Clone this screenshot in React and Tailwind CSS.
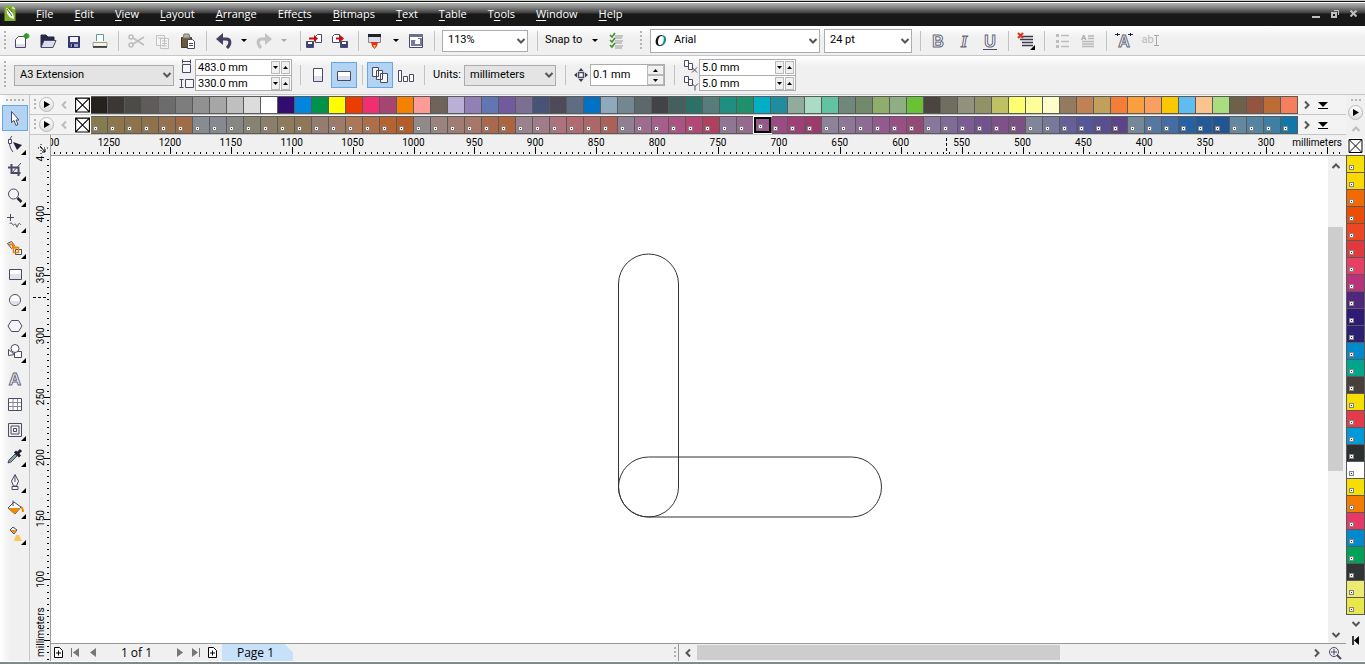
import React from 'react';
import { clsx } from 'clsx';

const MENUS = [
    ['', 'F', 'ile'], ['', 'E', 'dit'], ['', 'V', 'iew'], ['', 'L', 'ayout'], ['', 'A', 'rrange'], ['Effe', 'c', 'ts'],
    ['', 'B', 'itmaps'], ['', 'T', 'ext'], ['', 'T', 'able'], ['T', 'o', 'ols'], ['', 'W', 'indow'], ['', 'H', 'elp'],
];

const PALETTE_TOP = (
    '25221e 3b3734 4d4b48 5f5b5b 6b6c6b 7d7d7d 919191 a6a6a6 bfbfbf dcdcdc ffffff 330c70 0086e0 00924b ffff00 ' +
    'eb3d00 f12e71 a54672 f48100 fb9c96 70645a bab0d7 9080b6 6376b4 735a9c 7c6f92 475478 4e4a5a 5f6d83 0072c6 ' +
    '8fa9bc 738691 5d686d 404446 455f5f 2b7168 567d7b 208f82 1e916c 00aec5 208c9e 8fac9d a9dbc5 62c3a2 70877c ' +
    '73896b 8fae6b 8fae84 68c233 4a463f 706d61 92917d 919366 bfc063 fcfd6f fdfd99 fefdc9 947b60 c08255 c0a15c ' +
    'f47e38 f99f3e f99f61 fbc800 5fbbf0 fbc48c a9dd7f 6e614b 935540 bd6c38 f47f5a'
).split(' ');

const PALETTE_DOC = (
    '857b50 8d764b 8e734a 8f724b 96714f a06c48 868c92 868a90 868780 888272 8d7e6a 8f7a5c 8f7655 967c6e 9c7b69 ' +
    'ac7757 ae6f48 b46331 b65c26 908b8a 9c837d a17c73 a77768 aa694e ae643e 9a818e a17c88 ad727d b26972 ad6767 ' +
    'ab6058 907e94 9f6b8e a65f8a ab5382 b34876 b04060 917595 96698f 96578b 9a4b83 9e4077 9c3b6b 8e829b 8f7698 ' +
    '8c6b94 925a8f 984f84 934a75 86779b 7f6b96 7c5c94 71528f 7e5289 7c5082 808599 76799a 655f9a 555599 584e90 ' +
    '5d4388 74889b 5577a2 466ca6 2561a3 235b99 225594 62899f 5384a2 3e7fa4 0f78a9'
).split(' ');
const SELECTED_SWATCH = 39;

const PALETTE_SIDE = (
    'f7e000 fad800 f26a00 ec4d00 ed4621 e23a3c e64066 ba3279 4f277b 2f1a75 2d2272 008acc 00a68c 48403a ' +
    'f5de00 e53a49 009ad8 2b3031 ffffff f5de00 f27b00 e73968 0089ce 00a257 303434 ecea70 e8e84b'
).split(' ');

function Icon({ children, size = 18 }) {
    return (
        <svg width={size} height={size} viewBox={`0 0 ${size} ${size}`} fill="none" stroke="#4a4a66" className="shrink-0" aria-hidden="true">
            {children}
        </svg>
    );
}

function ToolButton({ label, active, className, children }) {
    return (
        <button
            type="button"
            aria-label={label}
            className={clsx('flex h-[26px] w-[26px] shrink-0 items-center justify-center', active && 'border border-[#66a7e8] bg-[#b3d3f3]', className)}
        >
            {children}
        </button>
    );
}

function Sep({ className }) {
    return (
        <div className={clsx('flex w-[10px] shrink-0 justify-center', className)}>
            <div className="h-5 w-px bg-[#c3c3c3]"></div>
        </div>
    );
}

function Grip({ className }) {
    return <div className={clsx('h-5 w-[2px] shrink-0 bg-[repeating-linear-gradient(#b4b4b4_0_2px,transparent_2px_4px)]', className)}></div>;
}

function Caret({ faded, label }) {
    return (
        <button type="button" aria-label={label} className="flex h-[26px] w-[14px] shrink-0 items-center justify-center">
            <svg width="6" height="4" aria-hidden="true"><path d="M0 0h6L3 3z" fill={faded ? '#aaa' : '#000'} /></svg>
        </button>
    );
}

function Chevron({ d, className, color = '#555' }) {
    return (
        <svg width="10" height="10" viewBox="0 0 10 10" fill="none" stroke={color} strokeWidth="2" className={className} aria-hidden="true">
            <path d={d} />
        </svg>
    );
}
const DOWN = 'M1.500 3L5 6.500 8.500 3';
const UP = 'M1.500 7L5 3.500 8.500 7';
const LEFT = 'M7 1.500L3.500 5 7 8.500';
const RIGHT = 'M3 1.500L6.500 5 3 8.500';

function Select({ label, value, className, selectClass }) {
    return (
        <div className={clsx('relative shrink-0', className)}>
            <select aria-label={label} className={clsx('block h-full w-full appearance-none border border-[#acacb0] pr-4 text-[11px] text-black', selectClass)}>
                <option>{value}</option>
            </select>
            <Chevron d={DOWN} className="pointer-events-none absolute top-1/2 right-[2px] -translate-y-1/2" />
        </div>
    );
}

function StepButton({ up, label, className }) {
    return (
        <button type="button" aria-label={label} className={clsx('flex items-center justify-center border border-[#b9b9b9] bg-[#f0f0f0]', className)}>
            <svg width="5" height="3" aria-hidden="true"><path d={up ? 'M0 3h5L2.500 0z' : 'M0 0h5L2.500 3z'} fill="#000" /></svg>
        </button>
    );
}

function DualInput({ rows }) {
    return (
        <div className="flex w-[97px] shrink-0 flex-col border border-[#acacb0] bg-white">
            {rows.map(([label, value], i) => (
                <div key={label} className={clsx('flex h-[15px] items-center', i > 0 && 'h-4 border-t border-[#acacb0]')}>
                    <input aria-label={label} defaultValue={value} className="h-[15px] w-0 flex-1 px-[2px] text-[11px] leading-[15px]" />
                    <StepButton label={`Decrease ${label}`} className="h-[13px] w-[9px]" />
                    <StepButton up label={`Increase ${label}`} className="mx-px h-[13px] w-[9px]" />
                </div>
            ))}
        </div>
    );
}

function MenuBar() {
    return (
        <header className="flex h-[26px] shrink-0 items-center border-t border-[#c8cfc8] bg-[linear-gradient(#111_0_1px,#fff_1px_2px,#b4b4b4_2px,#8a8a8a_6px,#3c3c3c_12px,#181818_13px)] pl-1 text-white">
            <svg width="12" height="17" viewBox="0 0 12 17" aria-label="CorelDRAW" role="img">
                <path d="M.5 1h8l3 3v12H.5z" fill="#7db32c" />
                <path d="M8.500 1v3h3z" fill="#e4f2c8" />
                <path d="M2.500 3l4 2 3 5 .5 4-4-1.500-3-4z" fill="#fff" />
                <path d="M3 4l5 7M5 3l3 4" stroke="#3a6a13" />
            </svg>
            <nav className="ml-5 flex gap-[21px] font-['Open_Sans','Noto_Sans',sans-serif] text-[11px] leading-4">
                {MENUS.map(([pre, key, post]) => (
                    <button type="button" key={pre + key + post}>
                        {pre}<span className="underline underline-offset-2">{key}</span>{post}
                    </button>
                ))}
            </nav>
            <div className="ml-auto flex items-center gap-[11px] pr-2 text-[#c0c0c0]">
                <button type="button" aria-label="Minimize"><svg width="8" height="10"><path d="M0 8h8" stroke="currentColor" strokeWidth="2" /></svg></button>
                <button type="button" aria-label="Restore"><svg width="8" height="8" fill="none" stroke="currentColor"><path d="M3 .5h4.500V5" /><path d="M1 3h4v4H1z" strokeWidth="2" /></svg></button>
                <button type="button" aria-label="Close"><svg width="7" height="7"><path d="M.5 .5l6 6M6.500 .5l-6 6" stroke="currentColor" strokeWidth="2" /></svg></button>
            </div>
        </header>
    );
}

function LetterIcon({ letter, italic, children }) {
    return (
        <Icon>
            <text x="9" y="15" textAnchor="middle" fontSize="16" fontWeight="bold" fontStyle={italic ? 'italic' : 'normal'} fontFamily={italic ? 'Liberation Serif, serif' : 'Liberation Sans, sans-serif'} fill="#fff" stroke="#66667c">{letter}</text>
            {children}
        </Icon>
    );
}

function StandardBar() {
    return (
        <div className="flex h-[30px] shrink-0 items-center overflow-hidden border-b border-[#c6c6c6] bg-[linear-gradient(#fff,#f0f0f0_12px)]">
            <Grip className="mr-[3px] ml-1" />
            <ToolButton label="New">
                <Icon><path d="M2.500 7.500l3-3h7v11h-10z" fill="#fff" /><path d="M3 12h9v3H3z" fill="#dcdcea" stroke="none" /><path d="M13.500 1v6M10.500 4h6M11.500 2l4 4M15.500 2l-4 4" stroke="#2a9a22" strokeWidth="1.500" /></Icon>
            </ToolButton>
            <ToolButton label="Open">
                <Icon><path d="M2 15V3h5l2 2h6v4" fill="#252a48" stroke="#252a48" /><path d="M2 15.500L5 8.500h12l-3 7z" fill="#dcdcec" /></Icon>
            </ToolButton>
            <ToolButton label="Save">
                <Icon><path d="M3.500 4.500h11v11h-11z" fill="#3c4080" stroke="#30346c" /><path d="M5 5h8v5H5z" fill="#f4f4fb" stroke="none" /><path d="M6 12h7v3H6z" fill="#9da0c8" stroke="none" /><path d="M7 12h2v3H7z" fill="#20244a" stroke="none" /></Icon>
            </ToolButton>
            <ToolButton label="Print">
                <Icon><path d="M5.500 9V2.500h7V9" fill="#fff" stroke="#5b9b96" /><path d="M2 10.500h14v4H2z" fill="#f4f3de" stroke="#999" /><path d="M2 15h14" stroke="#222" strokeWidth="1.500" /></Icon>
            </ToolButton>
            <Sep />
            <ToolButton label="Cut">
                <Icon><g stroke="#bcbcbc" strokeWidth="1.500"><circle cx="4" cy="5" r="2" /><circle cx="4" cy="13" r="2" /><path d="M6 6l11 7M6 12l11-7" /></g></Icon>
            </ToolButton>
            <ToolButton label="Copy">
                <Icon><g stroke="#c2c2c2" fill="#f5f5f5"><path d="M3.500 3.500h8v10h-8zM7.500 6.500h8v10h-8z" /><path d="M5 6h5M9 9h5M9 11.500h5M9 14h5" /></g></Icon>
            </ToolButton>
            <ToolButton label="Paste">
                <Icon><path d="M2.500 5.500h10v10h-10z" fill="#6b593c" stroke="#40351f" /><path d="M4 6l1-4h5l1 4z" fill="#b7b08e" stroke="#777" /><path d="M8.500 7.500h5l2 2v7h-7z" fill="#fff" /><path d="M10 11.500h4M10 13.500h4" /></Icon>
            </ToolButton>
            <Sep />
            <ToolButton label="Undo">
                <Icon><path d="M4 7h7c5 0 5 5 1 9" stroke="#42425f" strokeWidth="3" /><path d="M8 1v12L1 7z" fill="#42425f" stroke="none" /></Icon>
            </ToolButton>
            <Caret label="Undo list" />
            <ToolButton label="Redo">
                <Icon><path d="M14 7H7c-5 0-5 5-1 9" stroke="#c2c2c2" strokeWidth="3" /><path d="M10 1v12l7-6z" fill="#c2c2c2" stroke="none" /></Icon>
            </ToolButton>
            <Caret faded label="Redo list" />
            <Sep className="justify-end" />
            <ToolButton label="Import">
                <Icon><path d="M10.500 4.500l2-2h4v8h-6z" fill="#fff" /><path d="M1.500 9.500h7v6h-7z" fill="#3c4080" /><path d="M3 10h4v2H3z" fill="#fff" stroke="none" /><path d="M4 6.500h6" stroke="#c40d0d" strokeWidth="2" /><path d="M9 3v7l4-3.500z" fill="#c40d0d" stroke="none" /></Icon>
            </ToolButton>
            <ToolButton label="Export">
                <Icon><path d="M1.500 4.500l2-2h5v8h-7z" fill="#fff" /><path d="M9.500 9.500h7v6h-7z" fill="#3c4080" /><path d="M11 10h4v2h-4z" fill="#fff" stroke="none" /><path d="M5 6.500h5" stroke="#c40d0d" strokeWidth="2" /><path d="M9 3v7l4-3.500z" fill="#c40d0d" stroke="none" /></Icon>
            </ToolButton>
            <Sep />
            <ToolButton label="Application launcher">
                <Icon><path d="M1.500 2.500h12v8h-12z" fill="#dcdcec" stroke="#888" /><path d="M1 2h13v3H1z" fill="#20202c" stroke="none" /><path d="M4 10h7l-1 4-2.500 3L5 14z" fill="#e83018" stroke="none" /><path d="M6 13h3l-1.500 3z" fill="#ffc52f" stroke="none" /></Icon>
            </ToolButton>
            <Caret label="Launcher list" />
            <ToolButton label="Welcome screen">
                <Icon><path d="M2.500 2.500h13v13h-13z" fill="#fff" /><path d="M2 2h14v3H2z" fill="#6d6d8c" stroke="none" /><path d="M4 8h7v6H4zM11 6h4v8h-4z" fill="#747aa5" stroke="none" /><path d="M8 9l2-2h3v5H8z" fill="#fff" stroke="none" /></Icon>
            </ToolButton>
            <Sep />
            <Select label="Zoom level" value="113%" className="ml-[3px] h-[22px] w-[86px]" selectClass="bg-white pl-[5px]" />
            <Sep className="ml-1" />
            <span className="ml-[3px] w-[43px] shrink-0 text-[11px]">Snap to</span>
            <Caret label="Snap to list" />
            <ToolButton label="Snap options" className="ml-px">
                <Icon><path d="M8 4h8M8 6h7M8 9h8M8 11h7M8 14h8M8 16h7" stroke="#999" /><path d="M3 3l2 2 3-4M3 8l2 2 3-4M3 13l2 2 3-4" stroke="#3c8c2c" strokeWidth="1.500" /></Icon>
            </ToolButton>
            <Grip className="ml-[11px]" />
            <div className="relative ml-2 shrink-0">
                <Select label="Font" value="Arial" className="h-[24px] w-[170px]" selectClass="bg-white pl-[23px]" />
                <span className="pointer-events-none absolute top-[2px] left-[5px] bg-[linear-gradient(to_right,#111_60%,#1a8a88_60%)] bg-clip-text font-['Liberation_Serif',serif] text-[16px] leading-5 font-bold text-transparent italic">O</span>
            </div>
            <Select label="Font size" value="24 pt" className="ml-1 h-[24px] w-[88px]" selectClass="bg-white pl-[5px]" />
            <Sep className="ml-[3px]" />
            <ToolButton label="Bold"><LetterIcon letter="B" /></ToolButton>
            <ToolButton label="Italic"><LetterIcon letter="I" italic /></ToolButton>
            <ToolButton label="Underline"><LetterIcon letter="U"><path d="M2 17.500h14" /></LetterIcon></ToolButton>
            <Sep />
            <ToolButton label="Horizontal alignment">
                <Icon size={20}><path d="M4 5.500h13M4 8.500h13M6 11.500h11M6 14.500h11" stroke="#3a3a4c" strokeWidth="1.500" /><path d="M2 2l5 5M7 2L2 7" stroke="#e0301c" strokeWidth="2" /><path d="M19 14v5h-5z" fill="#000" stroke="none" /></Icon>
            </ToolButton>
            <Sep />
            <ToolButton label="Bullet list">
                <Icon><g stroke="#bdbdbd"><path d="M8 3.500h8M8 9.500h8M8 14.500h8" strokeWidth="1.500" /><path d="M3 3.500h3M3 9.500h3M3 14.500h3" strokeWidth="3" /></g></Icon>
            </ToolButton>
            <ToolButton label="Drop cap">
                <Icon><path d="M9 4h6M9 6.500h6M3 9.500h12M3 12h12M3 14.500h12" stroke="#b8b8b8" strokeWidth="1.500" /><text x="2" y="8" fontSize="8" fontWeight="bold" fill="#aaa" stroke="none">A</text></Icon>
            </ToolButton>
            <Sep className="w-2" />
            <ToolButton label="Character formatting">
                <LetterIcon letter="A"><path d="M0 2.500h5M13 2.500h5M2.500 1v3M15.500 1v3" stroke="#252540" /></LetterIcon>
            </ToolButton>
            <ToolButton label="Edit text" className="text-[11px] text-[#bbb]">
                <span>ab</span>
                <svg width="5" height="11" fill="none" stroke="#aaa" aria-hidden="true"><path d="M0 .5h5M2.500 .5v10M0 10.500h5" /></svg>
            </ToolButton>
        </div>
    );
}

function PropertyBar() {
    return (
        <div className="flex h-[39px] shrink-0 items-center overflow-hidden border-b border-[#c6c6c6] bg-[linear-gradient(#fff,#f0f0f0_10px)]">
            <Grip className="ml-1 h-7" />
            <Select label="Page size" value="A3 Extension" className="ml-2 h-[21px] w-[160px]" selectClass="bg-[#e4e4e4] pl-[5px]" />
            <div className="ml-[5px] flex w-4 flex-col items-center">
                <Icon size={16}><path d="M3.500 5.500h8v8h-8z" fill="#f8f8ff" /><path d="M3 2.500h9M3.500 .5v4M11.500 .5v4" /></Icon>
                <Icon size={16}><path d="M6.500 4.500h8v8h-8z" fill="#f8f8ff" /><path d="M2.500 4v9M.5 4.500h4M.5 12.500h4" /></Icon>
            </div>
            <DualInput rows={[['Page width', '483.0 mm'], ['Page height', '330.0 mm']]} />
            <Sep className="ml-[3px]" />
            <ToolButton label="Portrait"><Icon><path d="M4.500 2.500h9v13h-9z" fill="#fff" /><path d="M5 10h8v5H5z" fill="#e0e0ec" stroke="none" /></Icon></ToolButton>
            <ToolButton label="Landscape" active><Icon><path d="M2.500 5.500h13v9h-13z" fill="#fff" /><path d="M3 10h12v4H3z" fill="#dcdcec" stroke="none" /></Icon></ToolButton>
            <Sep className="w-2" />
            <ToolButton label="All pages" active><Icon><path d="M1.500 1.500h6v9h-6zM5.500 4.500h6v9h-6zM9.500 7.500h7v9h-7z" fill="#f8f8ff" /></Icon></ToolButton>
            <ToolButton label="Current page"><Icon><path d="M1.500 4.500h3v11h-3zM6.500 10.500h4v5h-4zM12.500 8.500h4v7h-4z" fill="#fff" /></Icon></ToolButton>
            <Sep />
            <label className="ml-1 flex shrink-0 items-center text-[11px]">
                <span className="w-[31px]">Units:</span>
                <Select label="Units" value="millimeters" className="h-[21px] w-[92px]" selectClass="bg-[#e4e4e4] pl-[5px]" />
            </label>
            <Sep className="ml-1" />
            <div className="mr-[2px] ml-1">
                <Icon size={14}><path d="M4.500 4.500h5v5h-5z" fill="#fff" strokeWidth="1.500" /><path d="M7 0l2.500 3h-5zM7 14l2.500-3h-5zM0 7l3-2.500v5zM14 7l-3-2.500v5z" fill="#3c3c50" stroke="none" /></Icon>
            </div>
            <div className="flex h-[22px] w-[75px] shrink-0 border border-[#acacb0] bg-white">
                <input aria-label="Nudge distance" defaultValue="0.1 mm" className="w-0 flex-1 px-[2px] text-[11px]" />
                <div className="flex w-[17px] flex-col">
                    <StepButton up label="Increase nudge" className="flex-1" />
                    <StepButton label="Decrease nudge" className="flex-1" />
                </div>
            </div>
            <Sep className="ml-1" />
            <div className="ml-1 flex flex-col">
                {['X', 'Y'].map((axis) => (
                    <Icon key={axis} size={16}><path d="M1.500 1.500h4v6h-4zM5.500 4.500h4v6h-4z" fill="#fff" />{axis === 'X' ? <path d="M9 8.500l5 5M14 8.500l-5 5" /> : <path d="M9 8.500l3 3 3-3M12 11.500v4" />}</Icon>
                ))}
            </div>
            <DualInput rows={[['Duplicate X', '5.0 mm'], ['Duplicate Y', '5.0 mm']]} />
        </div>
    );
}

const TOOLS = [
    ['Pick', false, <path d="M5.500 2.500v11l2.500-2 2 5 2-1-2-4.500h3z" fill="#fff" />],
    ['Shape', true, <><path d="M6 1C2 5 3 12 7 17" /><path d="M2.500 4.500h3v4h-3z" fill="#fff" /><path d="M7 7l9 3-5 5z" fill="#20203a" stroke="none" /></>],
    ['Crop', true, <><path d="M5.500 3v9h9M2 6.500h10.500V15" strokeWidth="2" /><path d="M15 2L5 13" /></>],
    ['Zoom', true, <><circle cx="7.500" cy="7" r="5" fill="#f4f4fa" /><path d="M11.500 11l4 4" stroke="#25253a" strokeWidth="2.500" /></>],
    ['Freehand', true, <><path d="M4.500 1v7M1 4.500h7" /><path d="M4 11c1-3 2 0 3 1s2-3 3 0 1 3 2 0 2-1 3 0" /></>],
    ['Smart fill', true, <><path d="M1.500 4.500l4-2 3 4-3 3z" fill="#eee" /><path d="M9.500 10.500h6v5h-6z" fill="#fff" /><path d="M3 5.500h4v3h4" stroke="#f08000" strokeWidth="2" /><path d="M7.500 8.500h5v5h-5z" stroke="#f08000" strokeWidth="1.500" /></>],
    ['Rectangle', true, <><path d="M3.500 4.500h12v10h-12z" fill="#fff" /><path d="M4 9h11v5H4z" fill="#e2e2ec" stroke="none" /></>],
    ['Ellipse', true, <><circle cx="9" cy="9" r="5.500" fill="#fff" /><path d="M4 10h10c-1 5-9 5-10 0z" fill="#e0e0ec" stroke="none" /></>],
    ['Polygon', true, <path d="M2 9l3.500-5.500h7L16 9l-3.500 5.500h-7z" fill="#f4f4fa" />],
    ['Basic shapes', true, <><path d="M2.500 6.500v6l6-1z" fill="#fff" /><path d="M8.500 8.500h7v6h-7z" fill="#fff" /><circle cx="9" cy="5.500" r="4" fill="#fff" /></>],
    ['Text', false, <text x="9" y="15.500" textAnchor="middle" fontSize="17" fontWeight="bold" fontFamily="Liberation Sans, sans-serif" fill="#fff" stroke="#66667c">A</text>],
    ['Table', false, <><path d="M2.500 3.500h13v12h-13z" fill="#fff" /><path d="M3 7.500h12M3 11.500h12M7 4v11M11.500 4v11" stroke="#8a8a9c" /></>],
    ['Interactive', true, <path d="M2.500 2.500h13v13h-13zM5 5h8v8H5zM7.500 7.500h3v3h-3z" />],
    ['Eyedropper', true, <><path d="M2 16l1-3 6-6 2 2-6 6z" fill="#7ba7a0" /><path d="M9 4.500l5 5M11 7l4-4" stroke="#20202e" strokeWidth="3" /></>],
    ['Outline', true, <path d="M9 1.500L5.500 8l2 5h3l2-5zM9 2v7M6 13.500h6v3H6z" fill="#f8f8f8" />],
    ['Fill', true, <><path d="M2 9l6-6 7 5-6 7z" fill="#fff" /><path d="M2 9h12l-5 6z" fill="#f28a00" stroke="none" /><path d="M7 7V1.500" /><path d="M15 8c2 1 2 3 2 5" stroke="#f28a00" strokeWidth="2" /></>],
    ['Interactive fill', true, <><path d="M4 5l3-3 4 3-3 4z" fill="#eee" /><path d="M4 5h6L8 8z" fill="#f28a00" stroke="none" /><path d="M10 10h3l3 6H8z" fill="#f6c65a" stroke="none" /></>],
];

function Toolbox() {
    return (
        <aside className="flex w-[30px] shrink-0 flex-col items-center border-r border-[#c3c8cb] bg-[linear-gradient(to_right,#fff,#f0f0f0_10px)]">
            <div className="mt-1 mb-1 h-[2px] w-[18px] shrink-0 bg-[repeating-linear-gradient(to_right,#b4b4b4_0_2px,transparent_2px_4px)]"></div>
            {TOOLS.map(([name, flyout, art], i) => (
                <ToolButton key={name} label={name} active={i === 0} className="relative">
                    <Icon>{art}</Icon>
                    {flyout && (
                        <svg width="5" height="5" className="absolute right-[2px] bottom-[2px]" aria-hidden="true"><path d="M5 0v5H0z" fill="#000" /></svg>
                    )}
                </ToolButton>
            ))}
        </aside>
    );
}

function RoundPlay({ label }) {
    return (
        <button type="button" aria-label={label} className="flex h-[15px] w-[15px] shrink-0 items-center justify-center rounded-full border border-[#b8b8b8] bg-[linear-gradient(#fff,#ddd)]">
            <svg width="6" height="7" aria-hidden="true"><path d="M0 0l6 3.500L0 7z" fill="#000" /></svg>
        </button>
    );
}

function NoColor({ className }) {
    return (
        <button type="button" aria-label="No color" className={clsx('shrink-0 bg-white', className)}>
            <svg width="100%" height="100%" viewBox="0 0 16 16" stroke="#000" fill="none" aria-hidden="true"><path d="M1.500 1.500h13v13h-13zM2 2l12 12M14 2L2 14" /></svg>
        </button>
    );
}

function Swatch({ color, marked, selected, className }) {
    return (
        <button
            type="button"
            aria-label={`#${color}`}
            style={{ backgroundColor: `#${color}` }}
            className={clsx('flex w-[17px] shrink-0 items-end border-[#5a5a5a]', selected ? 'border-2 border-black outline outline-white' : 'border-r', className)}
        >
            {marked && <span className="mb-[3px] ml-[3px] flex h-[3px] w-[3px] items-center justify-center bg-[#eee] outline outline-[#858585]"><span className="h-px w-px bg-[#333]"></span></span>}
        </button>
    );
}

function PaletteRow({ colors, marked, name }) {
    return (
        <div className="flex h-5 shrink-0 items-center overflow-hidden border-b border-[#c6c6c6] bg-[#f3f3f3]">
            <Grip className="ml-1 h-[11px]" />
            <div className="ml-[3px]"><RoundPlay label={`${name} menu`} /></div>
            <button type="button" aria-label={`${name} back`} className="mr-[5px] ml-[5px]"><Chevron d={LEFT} color="#bcbcbc" /></button>
            <div className="flex h-[18px] shrink-0">
                <NoColor className="w-[17px]" />
                <div className="flex border-y border-[#5a5a5a]">
                    {colors.map((c, i) => <Swatch key={i} color={c} marked={marked} selected={marked && i === SELECTED_SWATCH} />)}
                </div>
            </div>
            <button type="button" aria-label={`${name} forward`} className="ml-1"><Chevron d={RIGHT} /></button>
            <button type="button" aria-label={`${name} expand`} className="ml-[6px]">
                <svg width="10" height="8" aria-hidden="true"><path d="M0 1h10L5 6z" fill="#000" /><path d="M0 7.500h10" stroke="#000" /></svg>
            </button>
        </div>
    );
}

// 50 mm are 60.9 px apart, minor ticks every 5 mm
const STEP = 60.9;

function HorizontalRuler() {
    const majors = Array.from({ length: 24 }, (_, i) => i);
    return (
        <svg width="100%" height="21" className="block shrink-0 bg-[#f0f0f0]" shapeRendering="crispEdges">
            {majors.map((i) => {
                const x = 58 + (i - 1) * STEP;
                return (
                    <g key={i}>
                        <path d={`M${Math.round(x)}.500 12v7`} stroke="#000" />
                        {[1, 2, 3, 4, 5, 6, 7, 8, 9].map((k) => {
                            const tick = Math.round(x + (k * STEP) / 10);
                            return tick < 1290 && <path key={k} d={`M${tick}.500 17v2`} stroke="#000" />;
                        })}
                        {i < 21 && <text x={x} y="11" textAnchor="middle" fontSize="10">{1300 - i * 50}</text>}
                    </g>
                );
            })}
            <path d="M895.500 3v16" stroke="#000" strokeDasharray="3 2" />
            <text x="100%" y="11" dx="-4" textAnchor="end" fontSize="10">millimeters</text>
            <path d="M0 20.500h4000" stroke="#999" />
        </svg>
    );
}

function VerticalRuler() {
    const majors = [0, 1, 2, 3, 4, 5, 6, 7, 8];
    return (
        <div className="flex w-[21px] shrink-0 flex-col border-r border-[#999] bg-[#f0f0f0]">
            <svg width="20" height="20" fill="none" stroke="#000" className="shrink-0" aria-hidden="true">
                <path d="M8 13h10M11 9v10" strokeDasharray="1 2" /><path d="M10 11l5 6M15 14v3h-3" />
            </svg>
            <div className="h-0 flex-1">
                <svg width="20" height="100%" className="block overflow-hidden" shapeRendering="crispEdges">
                    {majors.map((i) => {
                        const y = 59 + (i - 1) * STEP;
                        return (
                            <g key={i}>
                                <path d={`M14 ${Math.round(y)}.500h6`} stroke="#000" />
                                {[1, 2, 3, 4, 5, 6, 7, 8, 9].map((k) => (
                                    <path key={k} d={`M17 ${Math.round(y + (k * STEP) / 10)}.500h2`} stroke="#000" />
                                ))}
                                {i < 8 && <text transform={`translate(14 ${y}) rotate(-90)`} textAnchor="middle" fontSize="10">{450 - i * 50}</text>}
                            </g>
                        );
                    })}
                    <path d="M3 142.500h15" stroke="#000" strokeDasharray="3 2" />
                    <text transform="translate(14 502) rotate(-90)" fontSize="10">millimeters</text>
                </svg>
            </div>
        </div>
    );
}

function PageArrow({ label, d, bar }) {
    return (
        <button type="button" aria-label={label}>
            <svg width="8" height="9" aria-hidden="true"><path d={d} fill="#777" />{bar !== undefined && <path d={`M${bar} 0v9`} stroke="#777" />}</svg>
        </button>
    );
}

function AddPage() {
    return (
        <button type="button" aria-label="Add page">
            <svg width="9" height="11" fill="#fff" stroke="#000" aria-hidden="true"><path d="M.5 .5h5l3 3v7h-8zM2 6h5M4.500 3.500v5" /></svg>
        </button>
    );
}

function PageBar() {
    return (
        <footer className="flex h-[18px] shrink-0 items-stretch border-t border-[#999] bg-[#f0f0f0] font-['Open_Sans','Noto_Sans',sans-serif] text-[12px] leading-4">
            <div className="flex min-w-0 flex-1 items-center">
                <div className="flex w-[166px] shrink-0 items-center pl-[3px]">
                    <AddPage />
                    <div className="ml-2 flex items-center gap-[10px]">
                        <PageArrow label="First page" d="M8 0v9L2 4.500z" bar={0.5} />
                        <PageArrow label="Previous page" d="M7 0v9L1 4.500z" />
                    </div>
                    <span className="flex-1 text-center">1 of 1</span>
                    <div className="flex items-center gap-2">
                        <PageArrow label="Next page" d="M1 0v9l6-4.500z" />
                        <PageArrow label="Last page" d="M0 0v9l6-4.500z" bar={7.5} />
                        <AddPage />
                    </div>
                </div>
                <button type="button" className="ml-[5px] h-[17px] w-[71px] bg-[#c7e1fb] pr-1 [clip-path:polygon(0_0,88%_0,100%_50%,100%_100%,0_100%)]">Page 1</button>
                <Grip className="ml-auto h-[11px]" />
            </div>
            <div className="ml-[2px] flex w-[668px] shrink-0 items-center border-l border-[#999]">
                <button type="button" aria-label="Scroll left" className="px-1"><Chevron d={LEFT} /></button>
                <div className="flex-1"><div className="h-[15px] w-[363px] bg-[#cdcdcd]"></div></div>
                <button type="button" aria-label="Scroll right" className="px-[2px]"><Chevron d={RIGHT} /></button>
                <button type="button" aria-label="Navigator" className="mx-1">
                    <svg width="14" height="14" fill="none" stroke="#4a4a66" aria-hidden="true"><circle cx="6" cy="6" r="4.500" /><path d="M3 6h6M6 3v6" /><path d="M9 9l4 4" strokeWidth="2" /></svg>
                </button>
            </div>
        </footer>
    );
}

function Canvas() {
    return (
        <div className="flex min-h-0 flex-1">
            <main className="min-w-0 flex-1 overflow-hidden bg-white">
                <svg width="100%" height="100%" fill="none" stroke="#333" className="block" role="img" aria-label="Drawing">
                    <rect x="567.5" y="98" width="60" height="263" rx="30" />
                    <rect x="567.5" y="301" width="263" height="60" rx="30" />
                </svg>
            </main>
            <div className="flex w-[18px] flex-col items-center bg-[#f0f0f0] pr-[3px]">
                <button type="button" aria-label="Scroll up" className="py-[5px]"><Chevron d={UP} /></button>
                <div className="w-full flex-1 pt-[51px]"><div className="h-[244px] bg-[#cdcdcd]"></div></div>
                <button type="button" aria-label="Scroll down" className="py-[3px]"><Chevron d={DOWN} /></button>
            </div>
        </div>
    );
}

function SidePalette() {
    return (
        <aside className="flex w-[19px] shrink-0 flex-col items-center bg-[#f0f0f0]">
            <div className="mt-1 h-[2px] w-[10px] bg-[repeating-linear-gradient(to_right,#b4b4b4_0_2px,transparent_2px_4px)]"></div>
            <div className="mt-1"><RoundPlay label="Document palette menu" /></div>
            <button type="button" aria-label="Palette up" className="my-1"><Chevron d={UP} color="#bcbcbc" /></button>
            <NoColor className="mb-px h-4 w-[17px]" />
            <div className="flex flex-col border-x border-t border-[#5a5a5a]">
                {PALETTE_SIDE.map((c, i) => <Swatch key={i} color={c} marked className="h-[17px] border-r-0 border-b" />)}
            </div>
            <button type="button" aria-label="Palette down" className="mt-1"><Chevron d={DOWN} /></button>
            <button type="button" aria-label="Expand palette" className="mt-[7px]">
                <svg width="8" height="9" aria-hidden="true"><path d="M7 0v9L2 4.500z" fill="#000" /><path d="M1 0v9" stroke="#000" strokeWidth="1.500" /></svg>
            </button>
        </aside>
    );
}

export default function App() {
    return (
        <div className="flex h-screen flex-col overflow-hidden bg-[#f0f0f0] font-[Roboto,'Noto_Sans',sans-serif] text-black">
            <MenuBar />
            <StandardBar />
            <PropertyBar />
            <div className="flex min-h-0 flex-1">
                <Toolbox />
                <div className="flex min-w-0 flex-1 flex-col">
                    <PaletteRow name="Default palette" colors={PALETTE_TOP} />
                    <PaletteRow name="Image palette" colors={PALETTE_DOC} marked />
                    <div className="flex min-h-0 flex-1">
                        <VerticalRuler />
                        <div className="flex min-w-0 flex-1 flex-col">
                            <HorizontalRuler />
                            <Canvas />
                            <PageBar />
                        </div>
                    </div>
                </div>
                <SidePalette />
            </div>
            <div className="h-[3px] shrink-0 border-t border-white bg-[#7f8a8c]"></div>
        </div>
    );
}
